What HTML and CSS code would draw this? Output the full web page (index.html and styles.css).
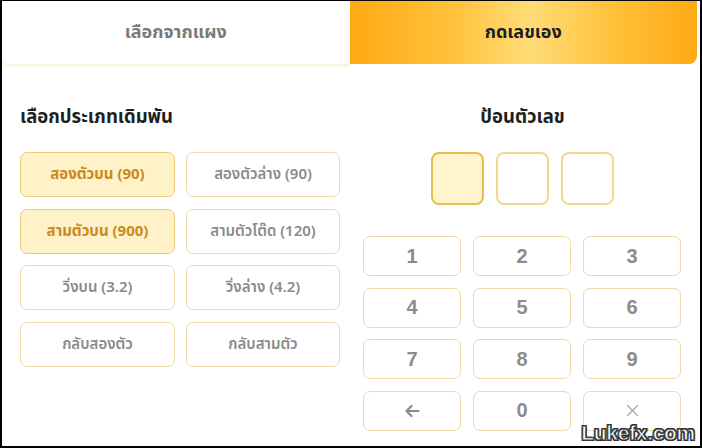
FILE: index.html
```html
<!DOCTYPE html>
<html lang="th">
<head>
    <meta charset="UTF-8">
    <meta name="viewport" content="width=device-width, initial-scale=1.0">
    <title>กดเลขเอง</title>
    <link rel="stylesheet" href="styles.css">
</head>
<body>

<div class="frame">
    <nav class="tabs">
        <div class="tab">เลือกจากแผง</div>
        <div class="tab active">กดเลขเอง</div>
    </nav>

    <main class="content">
        <section class="col">
            <h2>เลือกประเภทเดิมพัน</h2>
            <div class="bet-grid">
                <button class="bet selected">สองตัวบน (90)</button>
                <button class="bet">สองตัวล่าง (90)</button>
                <button class="bet selected">สามตัวบน (900)</button>
                <button class="bet">สามตัวโต๊ด (120)</button>
                <button class="bet">วิ่งบน (3.2)</button>
                <button class="bet">วิ่งล่าง (4.2)</button>
                <button class="bet">กลับสองตัว</button>
                <button class="bet">กลับสามตัว</button>
            </div>
        </section>

        <section class="col">
            <h2 class="center">ป้อนตัวเลข</h2>
            <div class="digits">
                <div class="digit current"></div>
                <div class="digit"></div>
                <div class="digit"></div>
            </div>
            <div class="keypad">
                <button class="key">1</button>
                <button class="key">2</button>
                <button class="key">3</button>
                <button class="key">4</button>
                <button class="key">5</button>
                <button class="key">6</button>
                <button class="key">7</button>
                <button class="key">8</button>
                <button class="key">9</button>
                <button class="key" aria-label="ลบ">
                    <svg width="16" height="14" viewBox="0 0 16 14">
                        <path d="M14.5 7H2.5M7.5 2L2.5 7l5 5" fill="none" stroke="#8a8a8a" stroke-width="2.2" stroke-linecap="round" stroke-linejoin="round"/>
                    </svg>
                </button>
                <button class="key">0</button>
                <button class="key" aria-label="ล้าง">
                    <svg width="13" height="13" viewBox="0 0 13 13">
                        <path d="M1.5 1.5l10 10M11.5 1.5l-10 10" fill="none" stroke="#a8a8a8" stroke-width="1.3" stroke-linecap="round"/>
                    </svg>
                </button>
            </div>
        </section>
    </main>

    <div class="watermark">Lukefx.com</div>
</div>

</body>
</html>
```

FILE: styles.css
```css
* {
    box-sizing: border-box;
}
body {
    margin: 0;
    padding: 0;
    background: #000;
    font-family: "Noto Sans Thai", "Liberation Sans", "Noto Sans", sans-serif;
}
.frame {
    position: relative;
    width: 702px;
    height: 448px;
    border-style: solid;
    border-color: #000;
    border-width: 1px 2px 2px 2px;
    background: #fff;
    overflow: hidden;
}

/* tabs */
.tabs {
    display: flex;
    height: 63px;
    padding-right: 3px;
}
.tab {
    flex: 1;
    display: flex;
    align-items: center;
    justify-content: center;
    font-size: 18px;
    font-weight: bold;
    color: #7a7a7a;
    background: #fff;
    border-radius: 0 0 0 8px;
    box-shadow: 0 2px 3px rgba(230, 200, 120, 0.25);
}
.tab.active {
    color: #1e1e1e;
    background: linear-gradient(90deg, #ffaa14 0%, #ffc23c 30%, #ffdc78 52%, #ffc23c 75%, #ffaa14 100%);
    border-radius: 0 0 8px 0;
    box-shadow: none;
}

/* body columns */
.content {
    display: flex;
    gap: 23px;
    padding: 41px 18px 0 18px;
}
.col {
    flex: 1;
}
h2 {
    margin: 0 0 23px 0;
    height: 24px;
    line-height: 24px;
    font-size: 18.5px;
    font-weight: bold;
    color: #1f1f1f;
}
h2.center {
    text-align: center;
}

button {
    font-family: inherit;
    cursor: pointer;
}

.bet-grid {
    display: grid;
    grid-template-columns: 155px 154px;
    column-gap: 11px;
    row-gap: 11.5px;
}
.bet {
    height: 45px;
    border: 1px solid #f0dca8;
    border-radius: 7px;
    background: #fff;
    color: #8a8a8a;
    font-size: 15px;
    font-weight: 600;
}
.bet.selected {
    background: #fff2c8;
    border-color: #eccb78;
    color: #c98a1e;
    font-weight: bold;
}

.digits {
    display: flex;
    justify-content: center;
    gap: 12px;
    margin-bottom: 31px;
}
.digit {
    width: 53px;
    height: 53px;
    border: 2px solid #f3d88e;
    border-radius: 8px;
    background: #fff;
}
.digit.current {
    background: #fff4cc;
    border-color: #e6bd55;
}

.keypad {
    display: grid;
    grid-template-columns: repeat(3, 98px);
    column-gap: 12px;
    row-gap: 11.5px;
}
.key {
    display: flex;
    align-items: center;
    justify-content: center;
    height: 40px;
    border: 1px solid #efd9a6;
    border-radius: 7px;
    background: #fff;
    color: #8c8c8c;
    font-family: "Liberation Sans", sans-serif;
    font-size: 20px;
    font-weight: bold;
}

.watermark {
    position: absolute;
    right: 5px;
    bottom: 1px;
    font-family: "Liberation Sans", sans-serif;
    font-size: 21px;
    font-weight: bold;
    color: #fff;
    letter-spacing: -0.3px;
    -webkit-text-stroke: 1px #444;
    text-shadow: 1px 1px 0 #222, -1px -1px 0 #222, 1px -1px 0 #222, -1px 1px 0 #222;
}
```
